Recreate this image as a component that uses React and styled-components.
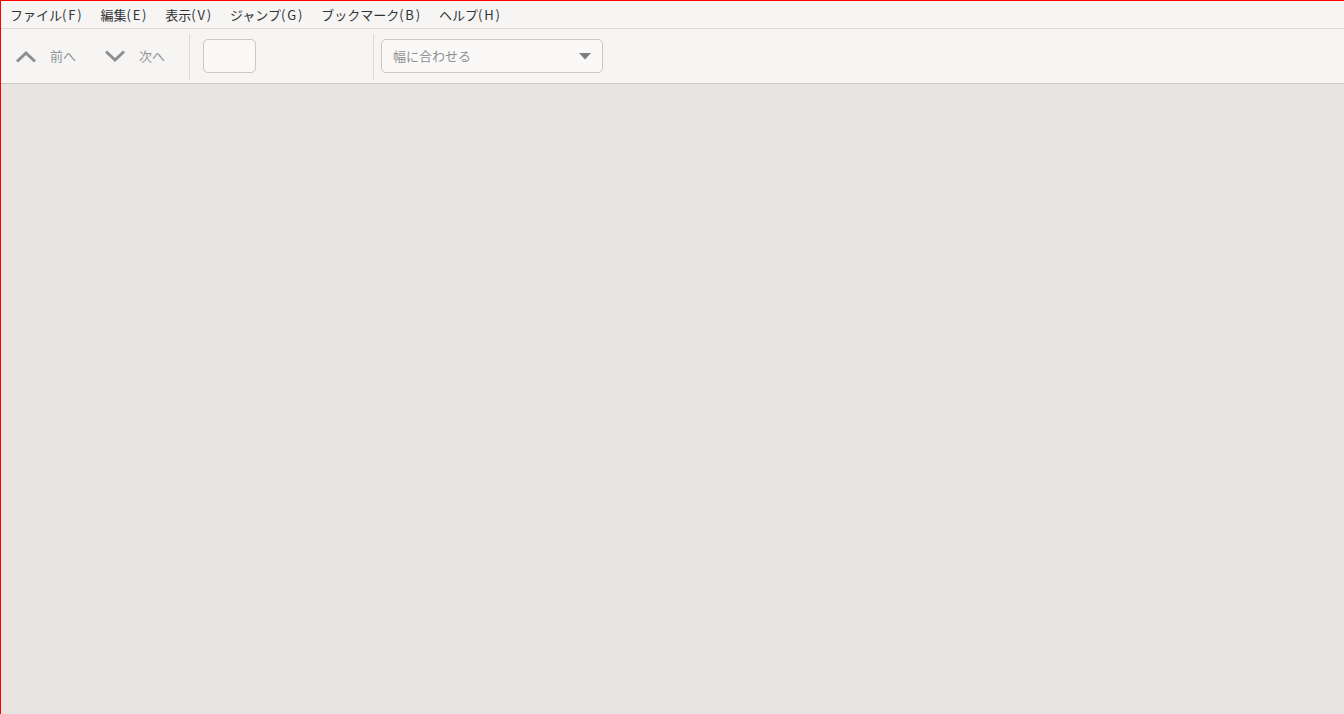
import React from 'react'
import styled, { createGlobalStyle } from 'styled-components'

const GlobalStyle = createGlobalStyle`
  html, body {
    margin: 0;
    padding: 0;
    background: #e8e4e1;
  }
  * {
    box-sizing: border-box;
  }
`

const Window = styled.div`
  width: 1344px;
  height: 714px;
  display: flex;
  flex-direction: column;
  border-top: 1px solid #ff0000;
  border-left: 1px solid #ff0000;
  background: #e8e4e1;
  font-family: "Noto Sans CJK JP", "Noto Sans", sans-serif;
  overflow: hidden;
`

const MenuBar = styled.div`
  height: 28px;
  display: flex;
  align-items: center;
  padding-left: 0.5px;
  background: #f6f5f4;
  border-bottom: 1px solid #dedad6;
`

const MenuItem = styled.div`
  flex-shrink: 0;
  padding: 0 8.5px;
  font-size: 13px;
  line-height: 27px;
  white-space: nowrap;
  color: #2e3436;
`

const Mnemonic = styled.span`
  letter-spacing: 1.8px;
`

const Toolbar = styled.div`
  height: 55px;
  display: flex;
  align-items: center;
  padding-left: 14px;
  background: #f6f5f4;
  border-bottom: 1px solid #cdc7c2;
`

const NavButton = styled.div`
  display: flex;
  align-items: center;
  gap: 13px;
  margin-right: ${p => p.$gap || 0}px;
`

const NavLabel = styled.span`
  font-size: 13px;
  line-height: 18px;
  margin-top: -1px;
  white-space: nowrap;
  color: #929595;
`

const Separator = styled.div`
  width: 1px;
  align-self: stretch;
  margin: 5px 0 4px;
  background: #dcd8d4;
`

const PageEntry = styled.div`
  width: 53px;
  height: 34px;
  margin-left: 13px;
  margin-right: 117px;
  border: 1px solid #cdc7c2;
  border-radius: 5px;
  background: #faf9f8;
`

const Combo = styled.div`
  width: 222px;
  height: 34px;
  margin-left: 7px;
  display: flex;
  align-items: center;
  justify-content: space-between;
  padding: 0 11px 0 11px;
  border: 1px solid #cdc7c2;
  border-radius: 5px;
  background: #faf9f8;
`

const ComboText = styled.span`
  font-size: 13px;
  line-height: 18px;
  margin-top: -1px;
  white-space: nowrap;
  color: #8e9192;
`

const Content = styled.div`
  flex: 1;
  background: #e8e4e1;
`

const Chevron = ({ up }) => (
  <svg width="22" height="13" viewBox="0 0 22 13">
    <polyline
      points={up ? '2,11.5 11,3 20,11.5' : '2,1.5 11,10 20,1.5'}
      fill="none"
      stroke="#8b8e8f"
      strokeWidth="3"
    />
  </svg>
)

const menus = [
  ['ファイル', 'F'],
  ['編集', 'E'],
  ['表示', 'V'],
  ['ジャンプ', 'G'],
  ['ブックマーク', 'B'],
  ['ヘルプ', 'H'],
]

export default function App() {
  return (
    <>
      <GlobalStyle />
      <Window>
        <MenuBar>
          {menus.map(([label, key]) => (
            <MenuItem key={key}>
              {label}
              <Mnemonic>({key})</Mnemonic>
            </MenuItem>
          ))}
        </MenuBar>
        <Toolbar>
          <NavButton $gap={28}>
            <Chevron up />
            <NavLabel>前へ</NavLabel>
          </NavButton>
          <NavButton $gap={24}>
            <Chevron />
            <NavLabel>次へ</NavLabel>
          </NavButton>
          <Separator />
          <PageEntry />
          <Separator />
          <Combo>
            <ComboText>幅に合わせる</ComboText>
            <svg width="12" height="7" viewBox="0 0 12 7">
              <polygon points="0,0 12,0 6,6.5" fill="#7b7e80" />
            </svg>
          </Combo>
        </Toolbar>
        <Content />
      </Window>
    </>
  )
}
